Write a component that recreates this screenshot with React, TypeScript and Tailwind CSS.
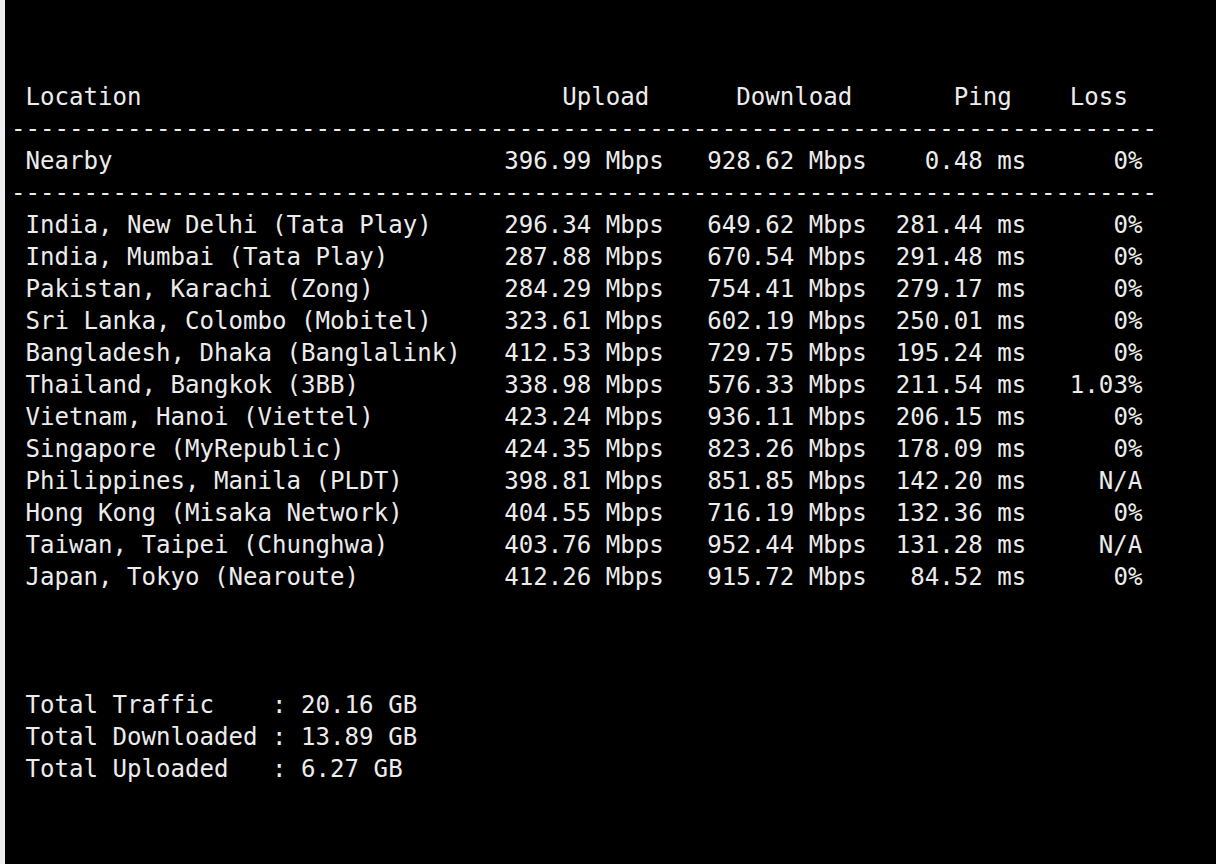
import React from "react";

type Row = { loc: string; up: string; down: string; ping: string; loss: string };

const nearby: Row = { loc: "Nearby", up: "396.99 Mbps", down: "928.62 Mbps", ping: "0.48 ms", loss: "0%" };

const rows: Row[] = [
  { loc: "India, New Delhi (Tata Play)", up: "296.34 Mbps", down: "649.62 Mbps", ping: "281.44 ms", loss: "0%" },
  { loc: "India, Mumbai (Tata Play)", up: "287.88 Mbps", down: "670.54 Mbps", ping: "291.48 ms", loss: "0%" },
  { loc: "Pakistan, Karachi (Zong)", up: "284.29 Mbps", down: "754.41 Mbps", ping: "279.17 ms", loss: "0%" },
  { loc: "Sri Lanka, Colombo (Mobitel)", up: "323.61 Mbps", down: "602.19 Mbps", ping: "250.01 ms", loss: "0%" },
  { loc: "Bangladesh, Dhaka (Banglalink)", up: "412.53 Mbps", down: "729.75 Mbps", ping: "195.24 ms", loss: "0%" },
  { loc: "Thailand, Bangkok (3BB)", up: "338.98 Mbps", down: "576.33 Mbps", ping: "211.54 ms", loss: "1.03%" },
  { loc: "Vietnam, Hanoi (Viettel)", up: "423.24 Mbps", down: "936.11 Mbps", ping: "206.15 ms", loss: "0%" },
  { loc: "Singapore (MyRepublic)", up: "424.35 Mbps", down: "823.26 Mbps", ping: "178.09 ms", loss: "0%" },
  { loc: "Philippines, Manila (PLDT)", up: "398.81 Mbps", down: "851.85 Mbps", ping: "142.20 ms", loss: "N/A" },
  { loc: "Hong Kong (Misaka Network)", up: "404.55 Mbps", down: "716.19 Mbps", ping: "132.36 ms", loss: "0%" },
  { loc: "Taiwan, Taipei (Chunghwa)", up: "403.76 Mbps", down: "952.44 Mbps", ping: "131.28 ms", loss: "N/A" },
  { loc: "Japan, Tokyo (Nearoute)", up: "412.26 Mbps", down: "915.72 Mbps", ping: "84.52 ms", loss: "0%" },
];

function DataRow({ r }: { r: Row }) {
  return (
    <div className="grid grid-cols-[32ch_12ch_14ch_11ch_8ch] pl-[1ch] h-[32px] whitespace-pre">
      <div>{r.loc}</div>
      <div className="text-right">{r.up}</div>
      <div className="text-right">{r.down}</div>
      <div className="text-right">{r.ping}</div>
      <div className="text-right">{r.loss}</div>
    </div>
  );
}

function Dashes() {
  return <div className="h-[32px] whitespace-pre">{"-".repeat(79)}</div>;
}

export default function App() {
  return (
    <div className="min-h-screen w-full bg-black flex">
      <div className="w-[5px] bg-[#eeeeee] shrink-0" />
      <div className="flex-1 pt-[81px] pl-[6px] font-['DejaVu_Sans_Mono',monospace] text-[24.1px] leading-[32px] text-[#ececec]">
        <div className="grid grid-cols-[32ch_12ch_14ch_11ch_8ch] pl-[1ch] h-[32px] whitespace-pre">
          <div>Location</div>
          <div className="text-right pr-[1ch]">Upload</div>
          <div className="text-right pr-[1ch]">Download</div>
          <div className="text-right pr-[1ch]">Ping</div>
          <div className="text-right pr-[1ch]">Loss</div>
        </div>
        <Dashes />
        <DataRow r={nearby} />
        <Dashes />
        {rows.map((r) => (
          <DataRow key={r.loc} r={r} />
        ))}
        <div className="mt-[96px] pl-[1ch] flex flex-col">
          {[
            ["Total Traffic", "20.16 GB"],
            ["Total Downloaded", "13.89 GB"],
            ["Total Uploaded", "6.27 GB"],
          ].map(([k, v]) => (
            <div key={k} className="flex h-[32px] whitespace-pre">
              <span className="w-[16ch] shrink-0">{k}</span>
              <span>{" : " + v}</span>
            </div>
          ))}
        </div>
      </div>
    </div>
  );
}
